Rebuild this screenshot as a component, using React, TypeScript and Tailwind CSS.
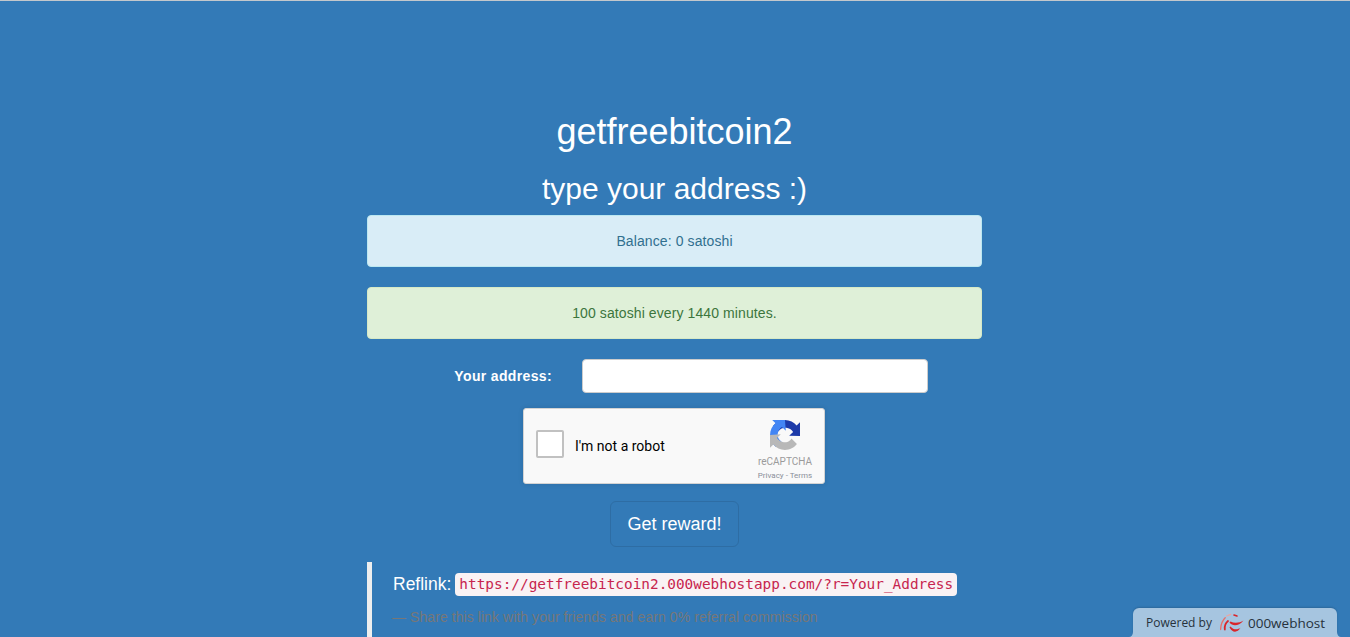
import React from 'react';

const RecaptchaLogo = () => (
  <svg width="30" height="30" viewBox="0 0 64 64" aria-hidden="true">
    <path d="M64 31.955l-.033-1.37V4.687l-7.16 7.16C50.948 4.674 42.033.093 32.05.093c-10.4 0-19.622 4.96-25.458 12.64l11.736 11.86a15.55 15.55 0 0 1 4.754-5.334c2.05-1.6 4.952-2.906 9.967-2.906.605 0 1.073.07 1.415.203 6.21.49 11.595 3.915 14.767 8.884l-8.307 8.307 26.075.208" fill="#1c3aa9" />
    <path d="M31.955 0l-1.37.033H4.687l7.16 7.16C4.674 13.052.093 21.967.093 31.95c0 10.4 4.96 19.622 12.64 25.458l11.86-11.736a15.55 15.55 0 0 1-5.334-4.754c-1.6-2.05-2.906-4.952-2.906-9.967 0-.605.07-1.073.203-1.415.49-6.21 3.915-11.595 8.884-14.767l8.307 8.307L31.955 0" fill="#4285f4" />
    <path d="M0 31.955l.033 1.37v25.9l7.16-7.16c5.86 7.173 14.775 11.754 24.76 11.754 10.4 0 19.622-4.96 25.458-12.64l-11.736-11.86a15.55 15.55 0 0 1-4.754 5.334c-2.05 1.6-4.952 2.906-9.967 2.906-.605 0-1.073-.07-1.415-.203-6.21-.49-11.595-3.915-14.767-8.884l8.307-8.307L0 31.955" fill="#b8b8b8" />
  </svg>
);

const HostLogo = () => (
  <svg width="24" height="22" viewBox="0 0 24 22" fill="none" aria-hidden="true">
    <path d="M0.6 17.5C0.8 12.5 2.4 8.5 5.2 5.8" stroke="#e8706b" strokeWidth="1.3" strokeLinecap="round" />
    <path d="M4.8 17.5C4.4 14 5.6 11 8 9" stroke="#d9252a" strokeWidth="1.8" strokeLinecap="round" />
    <path d="M6.7 4L10.7 2.3" stroke="#eba5a2" strokeWidth="1.3" strokeLinecap="round" />
    <path d="M14 3L17 4" stroke="#d9252a" strokeWidth="1.6" strokeLinecap="round" />
    <path d="M9.5 10.5C12.5 14.5 18.5 14.5 23.5 8.5C19.5 11 14.5 11.5 10.5 9.5Z" fill="#d9252a" />
    <path d="M9.5 15.2C12 20.5 17 21.5 20.5 15.8C17.5 18 13.5 18 10.5 14.5Z" fill="#d9252a" />
  </svg>
);

export default function App() {
  return (
    <div className="relative h-[637px] overflow-hidden border-t border-t-[#c4c8cc] bg-[#337ab7] font-['Liberation_Sans',Arial,sans-serif] text-[14px] leading-[20px] text-white">
      <div className="ml-[367px] w-[615px] pt-[111px]">
        <h1 className="text-center text-[36px] leading-[40px] font-normal">getfreebitcoin2</h1>
        <h2 className="mt-[20px] text-center text-[30px] leading-[33px] font-normal">type your address :)</h2>

        <div className="mt-[10px] rounded-[4px] border border-[#bce8f1] bg-[#d9edf7] p-[15px] text-center tracking-[0.1px] text-[#31708f]">
          Balance: 0 satoshi
        </div>
        <div className="mt-[20px] rounded-[4px] border border-[#d6e9c6] bg-[#dff0d8] p-[15px] text-center tracking-[0.1px] text-[#3c763d]">
          100 satoshi every 1440 minutes.
        </div>

        <div className="mt-[20px] flex items-center">
          <label className="w-[185px] text-right text-[14px] font-bold tracking-[0.35px]">Your address:</label>
          <input className="ml-[30px] h-[34px] w-[346px] rounded-[4px] border border-[#ccc] bg-white px-3 text-[#555]" />
        </div>

        <div className="mt-[15px] pl-[156px]">
          <div className="flex h-[76px] w-[302px] rounded-[3px] border border-[#d3d3d3] bg-[#f9f9f9] shadow-[0_0_4px_1px_rgba(0,0,0,0.08)] font-['Roboto',Arial,sans-serif]">
            <div className="ml-[12px] mt-[21px] h-[28px] w-[28px] rounded-[2px] border-2 border-[#c1c1c1] bg-white" />
            <div className="ml-[11px] mt-[27px] w-[175px] text-[14px] leading-[20px] text-black">I'm not a robot</div>
            <div className="flex w-[70px] flex-col items-center pt-[11px] text-[#9b9b9b]">
              <RecaptchaLogo />
              <div className="mt-[6px] text-[10px] leading-[12px]">reCAPTCHA</div>
              <div className="mt-[3px] whitespace-nowrap text-[8px] leading-[10px] text-[#8a8f99]">Privacy - Terms</div>
            </div>
          </div>
        </div>

        <div className="mt-[17px] flex justify-center">
          <button className="h-[46px] w-[129px] rounded-[6px] border border-[#2e6da4] bg-[#337ab7] text-[18px] leading-[24px] text-white">
            Get reward!
          </button>
        </div>

        <blockquote className="mt-[15px] border-l-[5px] border-l-[#eeeeee] px-[21px] pt-[10px] pb-[20px] text-[17.5px] leading-[25px]">
          <p className="flex items-center">
            Reflink:
            <code className="ml-[4px] rounded-[4px] bg-[#f9f2f4] px-[4px] py-[1px] font-['DejaVu_Sans_Mono',monospace] text-[14.4px] leading-[21px] text-[#c7254e]">
              https://getfreebitcoin2.000webhostapp.com/?r=Your_Address
            </code>
          </p>
          <footer className="-ml-[1px] mt-[10px] text-[14px] leading-[20px] tracking-[0.07px] text-[#777777]">— Share this link with your friends and earn 0% referral commission</footer>
        </blockquote>
      </div>

      <div className="absolute bottom-0 left-[1133px] flex h-[29px] w-[204px] items-center rounded-t-[6px] bg-[#a6c5e0] pl-[13px] font-['Open_Sans',sans-serif] text-[12px] text-[#26323c] shadow-[0_-1px_2px_rgba(0,0,0,0.15)]">
        Powered by
        <span className="ml-[8px] flex"><HostLogo /></span>
        <span className="ml-[4px] text-[13.5px] font-medium">000webhost</span>
        <svg className="absolute bottom-0 -left-[4px]" width="4" height="5" viewBox="0 0 4 5" aria-hidden="true"><path d="M4 0V5H0C2 5 4 3 4 0Z" fill="#a6c5e0" /></svg>
        <svg className="absolute bottom-0 -right-[4px]" width="4" height="5" viewBox="0 0 4 5" aria-hidden="true"><path d="M0 0V5H4C2 5 0 3 0 0Z" fill="#a6c5e0" /></svg>
      </div>
    </div>
  );
}
